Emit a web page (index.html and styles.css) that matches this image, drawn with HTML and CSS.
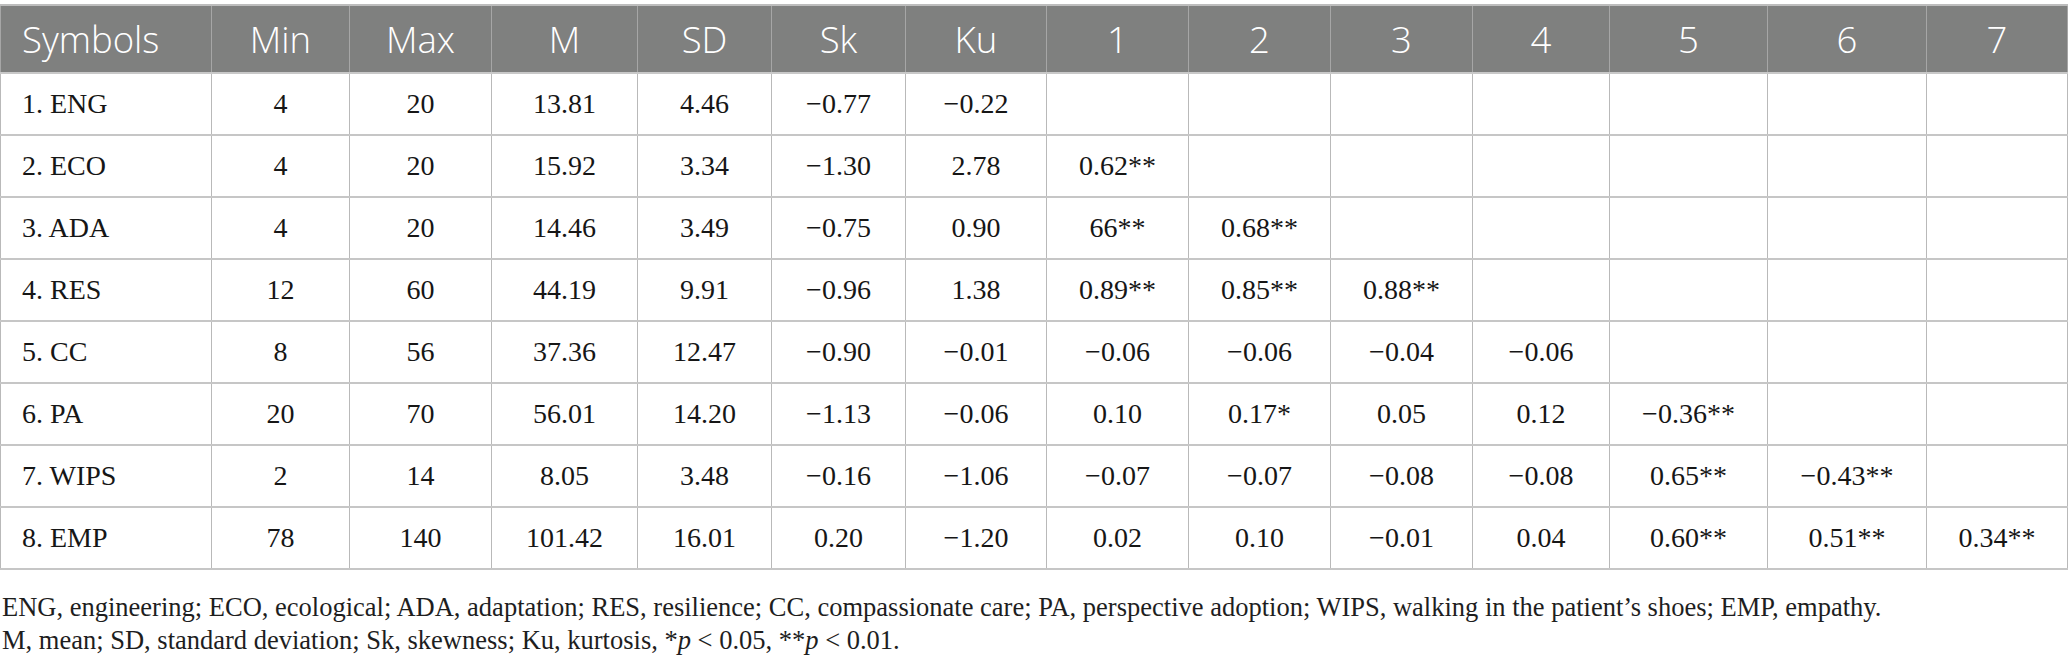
FILE: index.html
```html
<!DOCTYPE html>
<html lang="en">
<head>
<meta charset="utf-8">
<title>Descriptive statistics and correlations</title>
<link rel="stylesheet" href="styles.css">
</head>
<body>
<div class="page">
  <table class="stats">
    <colgroup>
      <col class="w-sym"><col class="w-138"><col class="w-142"><col class="w-146"><col class="w-134"><col class="w-134"><col class="w-141">
      <col class="w-142"><col class="w-142"><col class="w-142"><col class="w-137"><col class="w-158"><col class="w-159"><col class="w-141">
    </colgroup>
    <thead>
      <tr>
        <th class="left">Symbols</th><th>Min</th><th>Max</th><th>M</th><th>SD</th><th>Sk</th><th>Ku</th>
        <th>1</th><th>2</th><th>3</th><th>4</th><th>5</th><th>6</th><th>7</th>
      </tr>
    </thead>
    <tbody>
      <tr><td class="left">1. ENG</td><td>4</td><td>20</td><td>13.81</td><td>4.46</td><td>−0.77</td><td>−0.22</td><td></td><td></td><td></td><td></td><td></td><td></td><td></td></tr>
      <tr><td class="left">2. ECO</td><td>4</td><td>20</td><td>15.92</td><td>3.34</td><td>−1.30</td><td>2.78</td><td>0.62**</td><td></td><td></td><td></td><td></td><td></td><td></td></tr>
      <tr><td class="left">3. ADA</td><td>4</td><td>20</td><td>14.46</td><td>3.49</td><td>−0.75</td><td>0.90</td><td>66**</td><td>0.68**</td><td></td><td></td><td></td><td></td><td></td></tr>
      <tr><td class="left">4. RES</td><td>12</td><td>60</td><td>44.19</td><td>9.91</td><td>−0.96</td><td>1.38</td><td>0.89**</td><td>0.85**</td><td>0.88**</td><td></td><td></td><td></td><td></td></tr>
      <tr><td class="left">5. CC</td><td>8</td><td>56</td><td>37.36</td><td>12.47</td><td>−0.90</td><td>−0.01</td><td>−0.06</td><td>−0.06</td><td>−0.04</td><td>−0.06</td><td></td><td></td><td></td></tr>
      <tr><td class="left">6. PA</td><td>20</td><td>70</td><td>56.01</td><td>14.20</td><td>−1.13</td><td>−0.06</td><td>0.10</td><td>0.17*</td><td>0.05</td><td>0.12</td><td>−0.36**</td><td></td><td></td></tr>
      <tr><td class="left">7. WIPS</td><td>2</td><td>14</td><td>8.05</td><td>3.48</td><td>−0.16</td><td>−1.06</td><td>−0.07</td><td>−0.07</td><td>−0.08</td><td>−0.08</td><td>0.65**</td><td>−0.43**</td><td></td></tr>
      <tr><td class="left">8. EMP</td><td>78</td><td>140</td><td>101.42</td><td>16.01</td><td>0.20</td><td>−1.20</td><td>0.02</td><td>0.10</td><td>−0.01</td><td>0.04</td><td>0.60**</td><td>0.51**</td><td>0.34**</td></tr>
    </tbody>
  </table>
  <div class="notes">
    <p>ENG, engineering; ECO, ecological; ADA, adaptation; RES, resilience; CC, compassionate care; PA, perspective adoption; WIPS, walking in the patient’s shoes; EMP, empathy.</p>
    <p>M, mean; SD, standard deviation; Sk, skewness; Ku, kurtosis, *<i>p</i> &lt; 0.05, **<i>p</i> &lt; 0.01.</p>
  </div>
</div>
</body>
</html>
```
FILE: styles.css
```css
html, body {
  margin: 0;
  padding: 0;
  background: #ffffff;
}

.page {
  padding-top: 4px;
  font-family: "Liberation Serif", "Times New Roman", serif;
  color: #161616;
}

.stats {
  width: 2068px;
  border-collapse: collapse;
  table-layout: fixed;
}

.w-sym { width: 211px; }
.w-134 { width: 134px; }
.w-137 { width: 137px; }
.w-138 { width: 138px; }
.w-141 { width: 141px; }
.w-142 { width: 142px; }
.w-146 { width: 146px; }
.w-158 { width: 158px; }
.w-159 { width: 159px; }

.stats th {
  height: 66px;
  padding: 0;
  background: #7f807f;
  color: #ffffff;
  font-family: "Open Sans", "Noto Sans", sans-serif;
  font-weight: 300;
  font-size: 36.5px;
  text-align: center;
  border-top: 2px solid #bdbdbd;
  border-left: 1px solid #a6a6a6;
  border-right: 1px solid #a6a6a6;
  border-bottom: 2px solid #c8c8c8;
}

.stats td {
  height: 60px;
  padding: 0;
  font-size: 28px;
  text-align: center;
  white-space: nowrap;
  border-left: 1px solid #b9b9b9;
  border-right: 1px solid #b9b9b9;
  border-bottom: 2px solid #c6c6c6;
}

.stats th.left,
.stats td.left {
  text-align: left;
  padding-left: 21px;
}

.notes {
  margin-top: 21px;
  font-size: 26.5px;
  line-height: 33px;
  color: #1e1e1e;
}

.notes p {
  margin: 0;
  padding-left: 2px;
}
```
